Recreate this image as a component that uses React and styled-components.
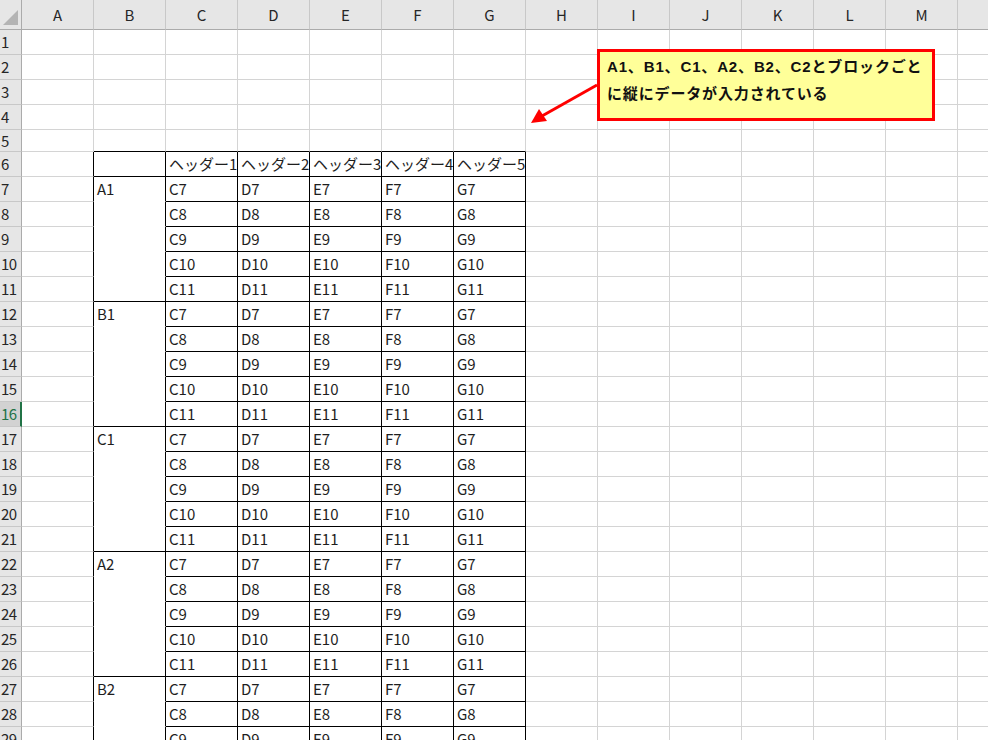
import styled, { createGlobalStyle } from "styled-components";

const GlobalStyle = createGlobalStyle`
  html, body {
    margin: 0;
    padding: 0;
    background: #ffffff;
    overflow: hidden;
  }
  body {
    font-family: "Noto Sans CJK JP", "Noto Sans", sans-serif;
  }
`;

const COLS = ["A", "B", "C", "D", "E", "F", "G", "H", "I", "J", "K", "L", "M", "N"];
const ROWS = Array.from({ length: 30 }, (_, i) => i + 1);
const GRID = "#d4d4d4";
const INK = "#000000";
const BLOCKS = ["A1", "B1", "C1", "A2", "B2", "C2"];
const SELECTED_ROW = 16;

const Sheet = styled.div`
  position: relative;
  width: 988px;
  height: 740px;
  overflow: hidden;
`;

const Grid = styled.div`
  display: grid;
  grid-template-columns: 22px repeat(14, 72px);
  grid-template-rows: 30px repeat(4, 25px) 22px repeat(25, 25px);
`;

const Corner = styled.div`
  background: #e6e6e6;
  border-right: 1px solid #ababab;
  border-bottom: 1px solid #ababab;
  box-sizing: border-box;
  display: flex;
  align-items: flex-end;
  justify-content: flex-end;
  padding: 0 3px 4px 0;
`;

const ColHead = styled.div`
  background: #e6e6e6;
  border-right: 1px solid #c8c8c8;
  border-bottom: 1px solid #ababab;
  box-sizing: border-box;
  display: flex;
  align-items: center;
  justify-content: center;
  font-size: 15px;
  color: #262626;
  padding-bottom: 1px;
`;

const RowHead = styled.div`
  background: ${(p) => (p.$selected ? "#d2d2d2" : "#e6e6e6")};
  border-right: ${(p) => (p.$selected ? "2px solid #217346" : "1px solid #ababab")};
  border-bottom: 1px solid #c8c8c8;
  box-sizing: border-box;
  display: flex;
  align-items: center;
  padding: 0 0 1px 1px;
  font-size: 15px;
  letter-spacing: -0.5px;
  color: ${(p) => (p.$selected ? "#217346" : "#262626")};
`;

const Cell = styled.div`
  background: #ffffff;
  border-right: 1px solid ${(p) => p.$right || GRID};
  border-bottom: 1px solid ${(p) => p.$bottom || GRID};
  box-sizing: border-box;
  display: flex;
  align-items: center;
  padding: 0 0 2px 3px;
  font-size: 15px;
  color: #1e1e1e;
  white-space: nowrap;
  overflow: hidden;
`;

const Callout = styled.div`
  position: absolute;
  left: 597px;
  top: 49px;
  width: 338px;
  height: 72px;
  box-sizing: border-box;
  border: 3px solid #ff0000;
  background: #ffff99;
  padding: 1px 0 0 7px;
  font-family: "Liberation Sans", "Noto Sans CJK JP", sans-serif;
  font-weight: bold;
  font-size: 15px;
  letter-spacing: 0.85px;
  line-height: 27px;
  color: #111111;
`;

const Arrow = styled.svg`
  position: absolute;
  left: 525px;
  top: 78px;
`;

function cellFor(row, colIndex) {
  const col = COLS[colIndex];
  const inTableCols = colIndex >= 1 && colIndex <= 6;
  let right;
  let bottom;
  let text = "";

  if (row === 5 && inTableCols) bottom = INK;
  if (row >= 6 && colIndex === 0) right = INK;

  if (row >= 6 && inTableCols) {
    right = INK;
    if (row === 6) {
      bottom = INK;
      if (colIndex >= 2) text = `ヘッダー${colIndex - 1}`;
    } else {
      const offset = (row - 7) % 5;
      const block = Math.floor((row - 7) / 5);
      if (colIndex === 1) {
        bottom = offset === 4 ? INK : "#ffffff";
        if (offset === 0) text = BLOCKS[block];
      } else {
        bottom = INK;
        text = `${col}${7 + offset}`;
      }
    }
  }

  return (
    <Cell key={`${col}${row}`} $right={right} $bottom={bottom}>
      {text}
    </Cell>
  );
}

export default function App() {
  return (
    <Sheet>
      <GlobalStyle />
      <Grid>
        <Corner>
          <svg width="15" height="15" viewBox="0 0 15 15">
            <polygon points="0,15 15,15 15,0" fill="#b4b4b4" />
          </svg>
        </Corner>
        {COLS.map((c) => (
          <ColHead key={c}>{c}</ColHead>
        ))}
        {ROWS.map((r) => [
          <RowHead key={`h${r}`} $selected={r === SELECTED_ROW}>
            {r}
          </RowHead>,
          ...COLS.map((_, i) => cellFor(r, i)),
        ])}
      </Grid>

      <Arrow width="80" height="50" viewBox="0 0 80 50">
        <line x1="72" y1="7" x2="17" y2="38" stroke="#ff0000" strokeWidth="3" />
        <polygon points="6,45 14,31 22,43" fill="#ff0000" />
      </Arrow>

      <Callout>
        A1、B1、C1、A2、B2、C2とブロックごと
        <br />
        に縦にデータが入力されている
      </Callout>
    </Sheet>
  );
}
